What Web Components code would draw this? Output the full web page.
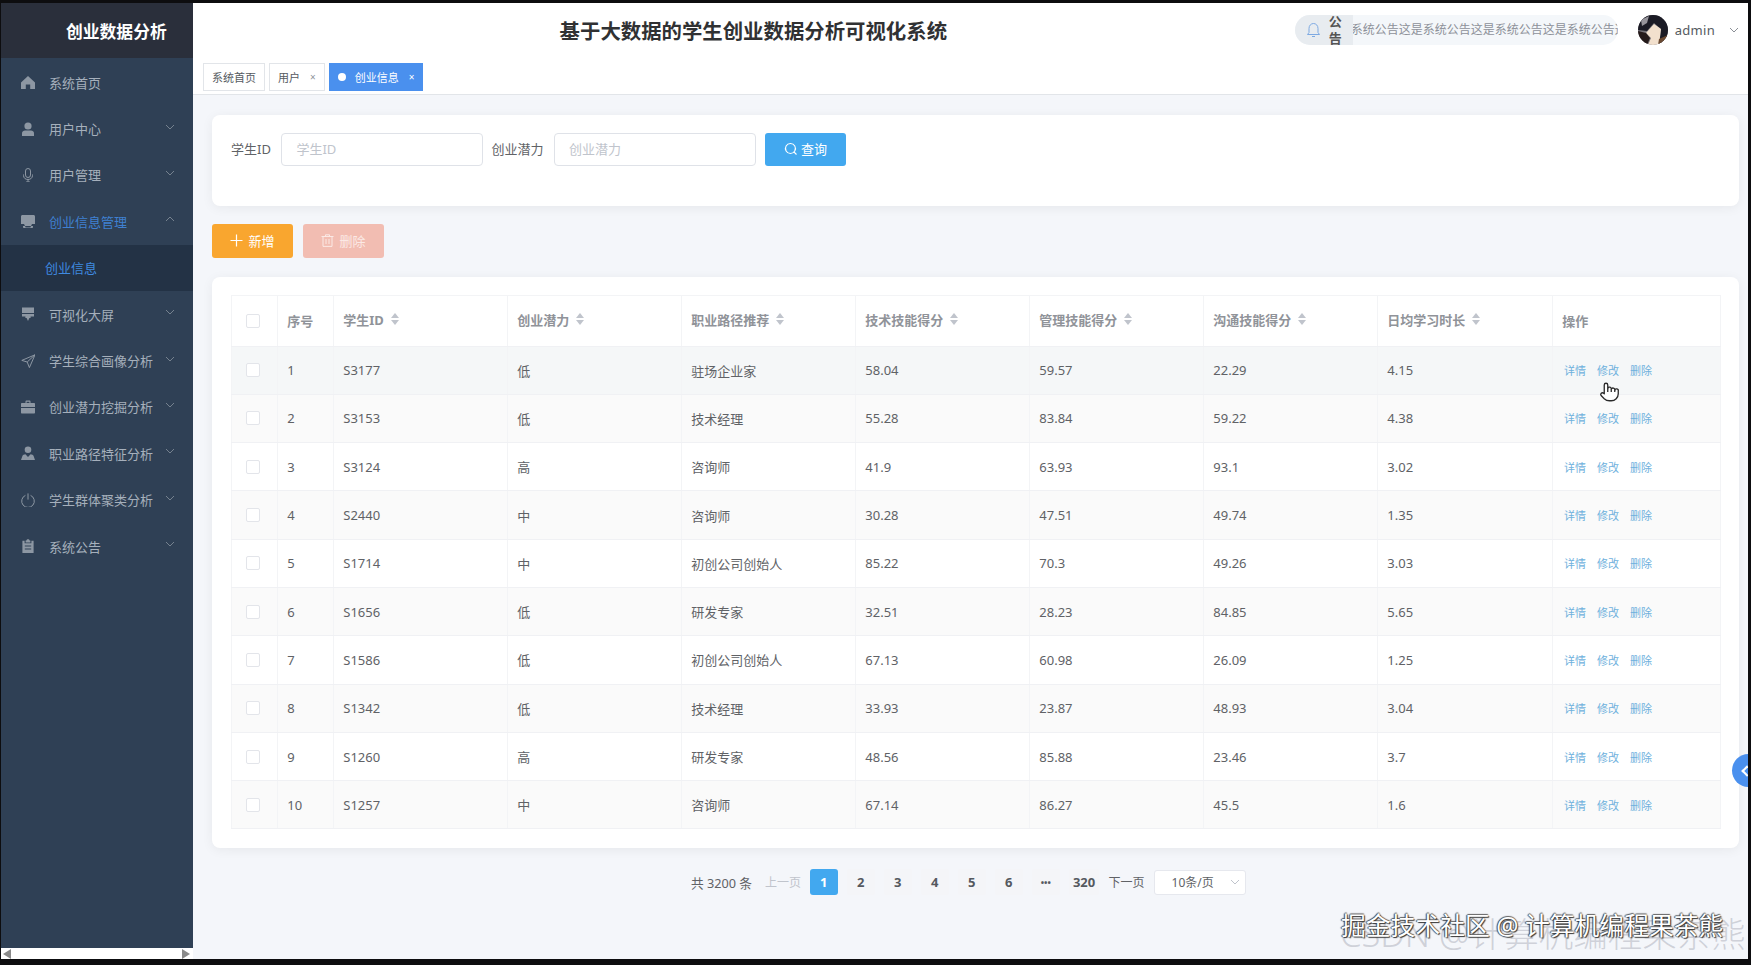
<!DOCTYPE html>
<html lang="zh">
<head>
<meta charset="utf-8">
<title>创业数据分析</title>
<style>
  html, body { margin: 0; height: 965px; overflow: hidden; background: #0d0d0f; }
  body { font-family: "Noto Sans", "Noto Sans CJK SC", sans-serif; }
</style>
</head>
<body>
<app-shell></app-shell>
<script>
const ICONS = {
  home: '<path d="M7 1 L14 7.5 V14 H9.2 V9.6 H4.8 V14 H0 V7.5 Z" fill="currentColor"/>',
  user: '<circle cx="7" cy="4" r="3.6" fill="currentColor"/><path d="M1 14 V11.2 C1 9.4 2.6 8.6 4 8.6 H10 C11.4 8.6 13 9.4 13 11.2 V14 Z" fill="currentColor"/>',
  mic: '<g fill="none" stroke="currentColor" stroke-width="1"><rect x="4.5" y="0.5" width="5" height="9" rx="2.5"/><path d="M2.5 6.5 V7.5 C2.5 10 4.5 11.5 7 11.5 C9.5 11.5 11.5 10 11.5 7.5 V6.5 M7 11.5 V14 M5 14 H9"/></g>',
  tray: '<path d="M1.5 1 H12.5 C13.4 1 14 1.6 14 2.5 V10 H11 L10 12 H4 L3 10 H0 V2.5 C0 1.6 .6 1 1.5 1 Z" fill="currentColor"/><path d="M2 12 H4 L4.6 13.6 H9.4 L10 12 H12 V13.2 C12 13.7 11.7 14 11.2 14 H2.8 C2.3 14 2 13.7 2 13.2 Z" fill="currentColor"/>',
  stamp: '<path d="M1 .5 H13 V6 H1 Z M1 7 H13 V9.5 H9.6 V11 H8.4 L7 14 L5.6 11 H4.4 V9.5 H1 Z" fill="currentColor"/>',
  send: '<path d="M14 .8 L.8 6.4 L6.2 8 L8.4 13.6 Z M14 .8 L6.2 8" fill="none" stroke="currentColor" stroke-width="1" stroke-linejoin="round"/>',
  case: '<path d="M4.5 3 V1.6 C4.5 1 5 .6 5.6 .6 H8.4 C9 .6 9.5 1 9.5 1.6 V3 H13 C13.6 3 14 3.4 14 4 V7 H0 V4 C0 3.4 .4 3 1 3 Z M5.6 3 H8.4 V1.7 H5.6 Z" fill="currentColor" fill-rule="evenodd"/><path d="M0 8 H14 V12.4 C14 13 13.6 13.4 13 13.4 H1 C.4 13.4 0 13 0 12.4 Z" fill="currentColor"/>',
  person: '<circle cx="7" cy="3.8" r="3.3" fill="currentColor"/><path d="M0 14 L1.4 10 C1.8 8.9 3 8.4 4.4 8.2 L7 11 L9.6 8.2 C11 8.4 12.2 8.9 12.6 10 L14 14 Z" fill="currentColor"/>',
  power: '<path d="M4.4 2.4 A6.3 6.3 0 1 0 9.6 2.4 M7 .4 V6.6" fill="none" stroke="currentColor" stroke-width="1"/>',
  clip: '<path d="M4.6 1.5 H5.4 C5.6 .6 6.2 .2 7 .2 C7.8 .2 8.4 .6 8.6 1.5 H9.4 V3.4 H4.6 Z M1.4 1.8 H3.6 V4.2 H10.4 V1.8 H12.6 V14 H1.4 Z M3.8 6.4 V7.4 H10.2 V6.4 Z M3.8 9.6 V10.6 H10.2 V9.6 Z" fill="currentColor" fill-rule="evenodd"/>'
};
const chevron = (dir, color) => `<svg width="10" height="6" viewBox="0 0 10 6" style="display:block"><path d="${dir === 'up' ? 'M1 5 L5 1 L9 5' : 'M1 1 L5 5 L9 1'}" fill="none" stroke="${color}" stroke-width="1"/></svg>`;

class MenuItem extends HTMLElement {
  constructor() {
    super();
    const active = this.hasAttribute('active');
    const arrow = this.getAttribute('arrow');
    this.attachShadow({ mode: 'open' }).innerHTML = `
      <style>
        :host { display: flex; align-items: center; height: 46.4px; padding-left: 20px; padding-right: 18px; font-size: 13px; color: ${active ? '#3f80d2' : '#a6b0bc'}; }
        svg.icon { width: 14px; height: 14px; color: #8d97a3; flex: none; margin-right: 14px; }
        .label { flex: 1; white-space: nowrap; }
        .arrow { margin-top: -4px; }
      </style>
      <svg class="icon" viewBox="0 0 14 14">${ICONS[this.getAttribute('icon')]}</svg>
      <span class="label"><slot></slot></span>
      ${arrow ? `<span class="arrow">${chevron(arrow, '#76828f')}</span>` : ''}`;
  }
}
customElements.define('menu-item', MenuItem);

class MenuSub extends HTMLElement {
  constructor() {
    super();
    this.attachShadow({ mode: 'open' }).innerHTML = `
      <style>
        :host { display: flex; align-items: center; height: 46.4px; padding-left: 44px; background: #233245; color: #3f8ae0; font-size: 13px; }
      </style>
      <slot></slot>`;
  }
}
customElements.define('menu-sub', MenuSub);

class SideMenu extends HTMLElement {
  constructor() {
    super();
    this.attachShadow({ mode: 'open' }).innerHTML = `
      <style>
        :host { display: flex; flex-direction: column; width: 192px; height: 100%; background: #fff; }
        .panel { flex: 1; background: #2f4055; display: flex; flex-direction: column; min-height: 0; }
        .brand { height: 55px; background: #2a2f3b; color: #fff; font-size: 16.8px; font-weight: 700; display: flex; align-items: center; padding-left: 65px; box-sizing: border-box; white-space: nowrap; }
        nav { padding-top: 1px; display: flex; flex-direction: column; }
        .bar { height: 11px; display: flex; align-items: center; justify-content: space-between; padding: 0 3px 0 2px; }
        .bar i { width: 0; height: 0; border-top: 5px solid transparent; border-bottom: 5px solid transparent; }
        .bar i:first-child { border-right: 8px solid #8a8a8a; }
        .bar i:last-child { border-left: 8px solid #8a8a8a; }
      </style>
      <div class="panel">
        <div class="brand">创业数据分析</div>
        <nav><slot></slot></nav>
      </div>
      <div class="bar"><i></i><i></i></div>`;
  }
}
customElements.define('side-menu', SideMenu);

class TopBar extends HTMLElement {
  constructor() {
    super();
    const notice = '系统公告这是'.repeat(4);
    this.attachShadow({ mode: 'open' }).innerHTML = `
      <style>
        :host { display: flex; align-items: center; height: 55px; background: #fff; padding-right: 9px; box-sizing: border-box; padding-bottom: 2px; }
        h1 { margin: 0; flex: 1; font-size: 20.4px; font-weight: 700; color: #303133; text-align: center; padding-left: 19px; white-space: nowrap; }
        .notice { width: 323px; height: 30px; display: flex; background: #f4f7fa; border-radius: 15px; overflow: hidden; margin-right: 20px; flex: none; }
        .tag { width: 58px; flex: none; background: #e8ecf0; display: flex; align-items: center; padding-left: 11px; box-sizing: border-box; gap: 8px; }
        .tag svg { width: 15px; height: 16px; color: #7da9e2; flex: none; }
        .tag span { width: 14px; font-size: 13px; line-height: 17px; font-weight: 700; color: #555; }
        .track { flex: 1; overflow: hidden; white-space: nowrap; font-size: 12px; line-height: 30px; color: #8d9199; }
        .track span { margin-left: -2px; }
        .avatar { width: 30px; height: 30px; flex: none; display: block; }
        .name { font-size: 13px; letter-spacing: .3px; color: #555a61; margin: 0 14px 0 7px; }
      </style>
      <h1>基于大数据的学生创业数据分析可视化系统</h1>
      <div class="notice">
        <div class="tag">
          <svg viewBox="0 0 15 16"><path d="M1.5 12.5 H13.5 L12 10.5 V6.5 C12 3.5 10 1.5 7.5 1.5 C5 1.5 3 3.5 3 6.5 V10.5 Z M6 14.5 H9" fill="none" stroke="currentColor" stroke-width="1"/></svg>
          <span>公告</span>
        </div>
        <div class="track"><span>${notice}</span></div>
      </div>
      <svg class="avatar" viewBox="0 0 30 30">
        <defs><clipPath id="round"><circle cx="15" cy="15" r="15"/></clipPath></defs>
        <g clip-path="url(#round)">
          <rect width="30" height="30" fill="#77747a"/>
          <path d="M0 0 H30 V20 L27 30 H21 L23 14 L16 8 L9 16 L0 15 Z" fill="#1b1b25"/>
          <path d="M3 5 L11 1 L9 8 L4 11 Z" fill="#96949b"/>
          <path d="M16 9 L23 14 L21 30 H10 L13 23 L8 18 Z" fill="#f2e0cd"/>
          <path d="M0 16 L8 18 L12 23 L9 30 H0 Z" fill="#241a1a"/>
          <path d="M21 24 L30 20 V30 H20 Z" fill="#6b4a32"/>
        </g>
      </svg>
      <span class="name">admin</span>
      ${chevron('down', '#8b8f96')}`;
  }
}
customElements.define('top-bar', TopBar);

class PageTab extends HTMLElement {
  constructor() {
    super();
    const on = this.hasAttribute('active');
    const closable = this.hasAttribute('closable');
    this.attachShadow({ mode: 'open' }).innerHTML = `
      <style>
        :host { display: flex; align-items: center; height: 28px; box-sizing: border-box; padding: 0 8px; font-size: 11px; white-space: nowrap; border: 1px solid ${on ? '#4a90ee' : '#e2e5e9'}; background: ${on ? '#4a90ee' : '#fff'}; color: ${on ? '#fff' : '#555a61'}; }
        .dot { width: 8px; height: 8px; border-radius: 50%; background: #fff; margin-right: 9px; }
        .x { font-size: 10px; margin-left: 10px; color: ${on ? '#fff' : '#8f949b'}; }
      </style>
      ${on ? '<span class="dot"></span>' : ''}<slot></slot>${closable ? '<span class="x">×</span>' : ''}`;
  }
}
customElements.define('page-tab', PageTab);

class TabStrip extends HTMLElement {
  constructor() {
    super();
    this.attachShadow({ mode: 'open' }).innerHTML = `
      <style>
        :host { display: flex; align-items: flex-start; gap: 4px; height: 37px; box-sizing: border-box; padding: 5px 0 0 10px; background: #fff; border-bottom: 1px solid #e2e5e9; }
      </style>
      <slot></slot>`;
  }
}
customElements.define('tab-strip', TabStrip);

class SearchCard extends HTMLElement {
  constructor() {
    super();
    this.attachShadow({ mode: 'open' }).innerHTML = `
      <style>
        :host { display: flex; align-items: flex-start; height: 91px; box-sizing: border-box; padding: 18px 19px; background: #fff; border-radius: 8px; box-shadow: 0 2px 12px rgba(0,0,0,.06); font-size: 13px; color: #606266; }
        label { white-space: nowrap; line-height: 32px; margin-right: 10.5px; }
        .input { width: 202px; height: 33px; box-sizing: border-box; border: 1px solid #dfe2e8; border-radius: 4px; padding-left: 14px; line-height: 30px; color: #c0c4cc; margin-right: 8px; font-size: 13px; }
        .go { width: 81px; height: 33px; margin-left: 1px; padding-bottom: 2px; box-sizing: border-box; background: #42a8ef; border-radius: 3px; color: #fff; display: flex; align-items: center; justify-content: center; gap: 3px; }
        .go svg { width: 14px; height: 14px; }
      </style>
      <label>学生ID</label><div class="input">学生ID</div>
      <label>创业潜力</label><div class="input">创业潜力</div>
      <div class="go">
        <svg viewBox="0 0 14 14"><path d="M6.5 1.5 A5 5 0 1 1 6.4 1.5 Z M10 10 L12.5 12.5" fill="none" stroke="#fff" stroke-width="1.1"/></svg>
        查询
      </div>`;
  }
}
customElements.define('search-card', SearchCard);

class ActionBar extends HTMLElement {
  constructor() {
    super();
    this.attachShadow({ mode: 'open' }).innerHTML = `
      <style>
        :host { display: flex; gap: 10px; margin: 18px 0 19px; }
        div { width: 81px; height: 34px; padding-bottom: 2px; box-sizing: border-box; border-radius: 3px; color: #fff; font-size: 13px; display: flex; align-items: center; justify-content: center; gap: 5px; }
        .add { background: #f9a62f; }
        .del { background: #f2bdb2; color: #fbe9e5; }
        svg { width: 13px; height: 13px; }
      </style>
      <div class="add"><svg viewBox="0 0 13 13"><path d="M6.5 .5 V12.5 M.5 6.5 H12.5" stroke="#fff" stroke-width="1.2"/></svg>新增</div>
      <div class="del"><svg viewBox="0 0 13 13"><path d="M.5 2.5 H12.5 M4.5 2.5 V.8 H8.5 V2.5 M2 2.5 V12.4 H11 V2.5 M5 5 V10 M8 5 V10" fill="none" stroke="#fbe9e5" stroke-width="1"/></svg>删除</div>`;
  }
}
customElements.define('action-bar', ActionBar);

const COLUMNS = '47px 56px 174px 174px 174px 174px 174px 174px 175px 168px';
const HEADS = ['学生ID', '创业潜力', '职业路径推荐', '技术技能得分', '管理技能得分', '沟通技能得分', '日均学习时长'];
const ROWS = [
  ['S3177', '低', '驻场企业家', '58.04', '59.57', '22.29', '4.15'],
  ['S3153', '低', '技术经理', '55.28', '83.84', '59.22', '4.38'],
  ['S3124', '高', '咨询师', '41.9', '63.93', '93.1', '3.02'],
  ['S2440', '中', '咨询师', '30.28', '47.51', '49.74', '1.35'],
  ['S1714', '中', '初创公司创始人', '85.22', '70.3', '49.26', '3.03'],
  ['S1656', '低', '研发专家', '32.51', '28.23', '84.85', '5.65'],
  ['S1586', '低', '初创公司创始人', '67.13', '60.98', '26.09', '1.25'],
  ['S1342', '低', '技术经理', '33.93', '23.87', '48.93', '3.04'],
  ['S1260', '高', '研发专家', '48.56', '85.88', '23.46', '3.7'],
  ['S1257', '中', '咨询师', '67.14', '86.27', '45.5', '1.6']
];

class DataTable extends HTMLElement {
  constructor() {
    super();
    const box = '<span class="cell box"><i></i></span>';
    const head = HEADS.map(h => `<span class="cell th">${h}<b class="sort"><u></u><s></s></b></span>`).join('');
    const rows = ROWS.map((r, i) => `
      <div class="row ${i === 0 ? 'hover' : i % 2 ? 'stripe' : ''}">
        ${box}<span class="cell">${i + 1}</span>
        ${r.map(v => `<span class="cell">${v}</span>`).join('')}
        <span class="cell ops"><a>详情</a><a>修改</a><a>删除</a></span>
      </div>`).join('');
    this.attachShadow({ mode: 'open' }).innerHTML = `
      <style>
        :host { display: block; height: 571px; box-sizing: border-box; padding: 18px 18px 0 19px; background: #fff; border-radius: 8px; box-shadow: 0 2px 12px rgba(0,0,0,.06); font-size: 13px; color: #606266; }
        .row { display: grid; grid-template-columns: ${COLUMNS}; height: 48.3px; border-bottom: 1px solid #f0f1f4; box-sizing: border-box; }
        .head { height: 51.5px; border-top: 1px solid #f3f4f6; color: #909399; font-weight: 700; }
        .hover { background: #f5f7f8; }
        .stripe { background: #fafafa; }
        .cell { display: flex; align-items: center; padding-left: 9.3px; border-right: 1px solid #f3f4f6; white-space: nowrap; min-width: 0; }
        .cell:first-child { border-left: 1px solid #f3f4f6; }
        .th { padding-bottom: 3px; }
        .box { padding-left: 14px; }
        .box i { width: 12px; height: 12px; border: 1px solid #e3e5ea; border-radius: 2px; background: #fff; display: block; }
        .sort { display: inline-block; margin-left: 7px; width: 8px; }
        .sort u, .sort s { display: block; width: 0; height: 0; border-left: 4px solid transparent; border-right: 4px solid transparent; }
        .sort u { border-bottom: 5px solid #c0c4cc; margin-bottom: 2px; }
        .sort s { border-top: 5px solid #c0c4cc; }
        .ops { gap: 11px; font-size: 11px; color: #6fb1dd; padding-left: 11px; }
      </style>
      <div class="row head">
        ${box}<span class="cell">序号</span>${head}<span class="cell">操作</span>
      </div>
      ${rows}`;
  }
}
customElements.define('data-table', DataTable);

class PageNav extends HTMLElement {
  constructor() {
    super();
    const nums = ['1', '2', '3', '4', '5', '6', '•••', '320'];
    this.attachShadow({ mode: 'open' }).innerHTML = `
      <style>
        :host { display: flex; align-items: center; height: 26px; margin-top: 21px; padding-left: 479px; font-size: 13px; color: #606266; white-space: nowrap; }
        .total { margin-right: 13px; font-size: 12.7px; }
        .prev { color: #c0c4cc; margin-right: 9px; font-size: 12px; }
        .num { width: 27.5px; height: 26px; border-radius: 3px; background: #f4f5f8; font-weight: 700; color: #55595f; display: flex; align-items: center; justify-content: center; margin-right: 9.5px; }
        .num.on { background: #42a8ef; color: #fff; }
        .num.more { font-size: 9px; }
        .num.last { width: 30px; margin-right: 9.5px; }
        .next { font-size: 12px; margin-right: 9px; }
        .size { width: 92px; height: 25px; box-sizing: border-box; border: 1px solid #e6e8ee; border-radius: 3px; background: #fff; font-size: 12px; display: flex; align-items: center; justify-content: space-between; padding: 0 5px 0 17px; }
      </style>
      <span class="total">共 3200 条</span>
      <span class="prev">上一页</span>
      ${nums.map((n, i) => `<span class="num${i === 0 ? ' on' : ''}${i === 7 ? ' last' : ''}${i === 6 ? ' more' : ''}">${n}</span>`).join('')}
      <span class="next">下一页</span>
      <span class="size">10条/页${chevron('down', '#c0c4cc')}</span>`;
  }
}
customElements.define('page-nav', PageNav);

class AppShell extends HTMLElement {
  constructor() {
    super();
    this.attachShadow({ mode: 'open' }).innerHTML = `
      <style>
        :host { display: block; width: 1747px; height: 956px; margin: 3px 0 0 1px; position: relative; overflow: hidden; background: #f4f6fa; }
        .frame { display: grid; grid-template-columns: 192px 1fr; height: 100%; }
        main { min-width: 0; display: flex; flex-direction: column; }
        .content { padding: 20px 9px 0 19px; }
        .handle { position: absolute; right: -17px; top: 751px; width: 33px; height: 33px; border-radius: 50%; background: #4a90ee; }
        .handle::before { content: ""; position: absolute; left: 11px; top: 13px; width: 6px; height: 6px; border-left: 2px solid #fff; border-bottom: 2px solid #fff; transform: rotate(45deg); }
        .hand { position: absolute; left: 1598px; top: 377px; width: 21px; height: 24px; }
        .mark { position: absolute; white-space: nowrap; }
        .mark.csdn { left: 1339px; top: 911px; font-size: 34.5px; line-height: 40px; color: rgba(175,178,188,.55); font-weight: 300; }
        .mark.juejin { left: 1340px; top: 906px; font-size: 24.8px; line-height: 32px; color: #fff; text-shadow: 1px 1px 1px #333, -1px 0 1px #444, 0 -1px 1px #666; }
      </style>
      <div class="frame">
        <side-menu>
          <menu-item icon="home">系统首页</menu-item>
          <menu-item icon="user" arrow="down">用户中心</menu-item>
          <menu-item icon="mic" arrow="down">用户管理</menu-item>
          <menu-item icon="tray" arrow="up" active>创业信息管理</menu-item>
          <menu-sub>创业信息</menu-sub>
          <menu-item icon="stamp" arrow="down">可视化大屏</menu-item>
          <menu-item icon="send" arrow="down">学生综合画像分析</menu-item>
          <menu-item icon="case" arrow="down">创业潜力挖掘分析</menu-item>
          <menu-item icon="person" arrow="down">职业路径特征分析</menu-item>
          <menu-item icon="power" arrow="down">学生群体聚类分析</menu-item>
          <menu-item icon="clip" arrow="down">系统公告</menu-item>
        </side-menu>
        <main>
          <top-bar></top-bar>
          <tab-strip>
            <page-tab>系统首页</page-tab>
            <page-tab closable>用户</page-tab>
            <page-tab active closable>创业信息</page-tab>
          </tab-strip>
          <div class="content">
            <search-card></search-card>
            <action-bar></action-bar>
            <data-table></data-table>
            <page-nav></page-nav>
          </div>
        </main>
      </div>
      <span class="handle"></span>
      <svg class="hand" viewBox="0 0 24 24">
        <path d="M22 11 V14 A8 8 0 0 1 14 22 H12 C9.2 22 7.5 21.1 6 19.7 L2.4 16.1 A2 2 0 0 1 5.2 13.3 L6 14 V4 A2 2 0 0 1 10 4 V8 A2 2 0 0 1 14 9 A2 2 0 0 1 18 10 A2 2 0 0 1 22 11 Z" fill="#fff" stroke="#2a2a2a" stroke-width="1.5" stroke-linejoin="round"/>
        <path d="M10 8 V12 M14 9 V12 M18 10 V12" fill="none" stroke="#2a2a2a" stroke-width="1.5"/>
      </svg>
      <span class="mark csdn">CSDN @计算机编程果茶熊</span>
      <span class="mark juejin">掘金技术社区 @ 计算机编程果茶熊</span>`;
  }
}
customElements.define('app-shell', AppShell);
</script>
</body>
</html>
